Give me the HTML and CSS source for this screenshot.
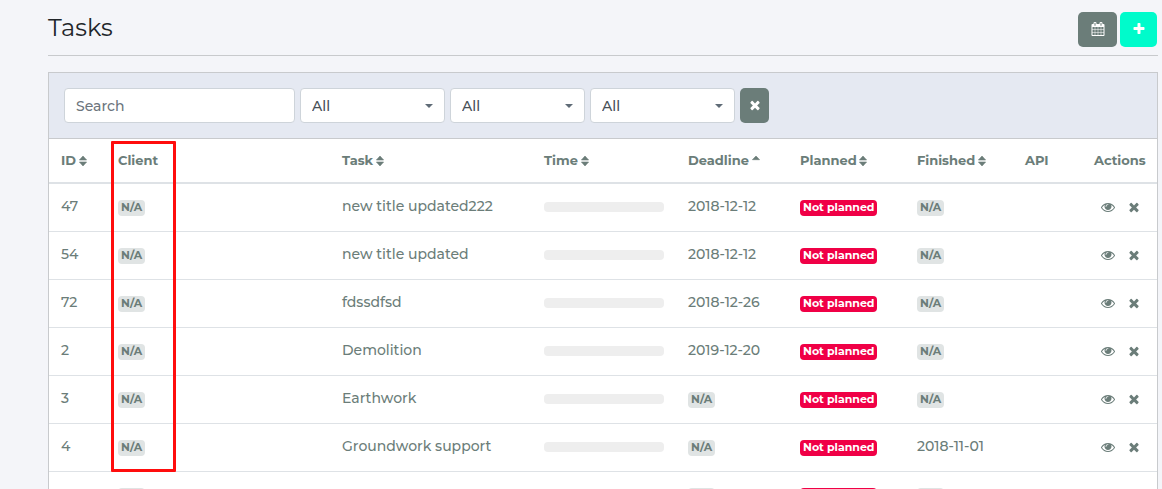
FILE: index.html
```html
<!DOCTYPE html>
<html lang="en">
<head>
<meta charset="utf-8">
<title>Tasks</title>
<link rel="stylesheet" href="styles.css">
<script src="tasks.js" defer></script>
</head>
<body>
<svg class="sprite" aria-hidden="true">
  <symbol id="calendar" viewBox="0 0 1792 1792"><path d="M192 1664h288v-288h-288v288zm352 0h320v-288h-320v288zm-352-352h288v-320h-288v320zm352 0h320v-320h-320v320zm-352-384h288v-288h-288v288zm736 736h320v-288h-320v288zm-384-736h320v-288h-320v288zm768 736h288v-288h-288v288zm-384-352h320v-320h-320v320zm-352-864v-288q0-13-9.500-22.500t-22.500-9.500h-64q-13 0-22.500 9.500t-9.500 22.500v288q0 13 9.500 22.500t22.500 9.500h64q13 0 22.500-9.500t9.500-22.500zm736 864h288v-320h-288v320zm-384-384h320v-288h-320v288zm384 0h288v-288h-288v288zm32-480v-288q0-13-9.500-22.500t-22.500-9.500h-64q-13 0-22.500 9.500t-9.500 22.500v288q0 13 9.500 22.500t22.500 9.500h64q13 0 22.500-9.500t9.500-22.500zm384-64v1280q0 52-38 90t-90 38h-1408q-52 0-90-38t-38-90v-1280q0-52 38-90t90-38h128v-96q0-66 47-113t113-47h64q66 0 113 47t47 113v96h384v-96q0-66 47-113t113-47h64q66 0 113 47t47 113v96h128q52 0 90 38t38 90z"/></symbol>
  <symbol id="plus" viewBox="0 0 1792 1792"><path d="M1600 736v192q0 40-28 68t-68 28h-416v416q0 40-28 68t-68 28h-192q-40 0-68-28t-28-68v-416h-416q-40 0-68-28t-28-68v-192q0-40 28-68t68-28h416v-416q0-40 28-68t68-28h192q40 0 68 28t28 68v416h416q40 0 68 28t28 68z"/></symbol>
  <symbol id="times" viewBox="0 0 1792 1792"><path d="M1490 1322q0 40-28 68l-136 136q-28 28-68 28t-68-28l-294-294-294 294q-28 28-68 28t-68-28l-136-136q-28-28-28-68t28-68l294-294-294-294q-28-28-28-68t28-68l136-136q28-28 68-28t68 28l294 294 294-294q28-28 68-28t68 28l136 136q28 28 28 68t-28 68l-294 294 294 294q28 28 28 68z"/></symbol>
  <symbol id="eye" viewBox="0 0 1792 1792"><path d="M1664 960q-152-236-381-353 61 104 61 225 0 185-131.500 316.500t-316.500 131.500-316.500-131.500-131.500-316.500q0-121 61-225-229 117-381 353 133 205 333.500 326.500t434.500 121.500 434.500-121.500 333.500-326.500zm-720-384q0-20-14-34t-34-14q-125 0-214.500 89.500t-89.500 214.500q0 20 14 34t34 14 34-14 14-34q0-86 61-147t147-61q20 0 34-14t14-34zm848 384q0 34-20 69-140 230-376.500 368.500t-499.500 138.500-499.500-139-376.500-368q-20-35-20-69t20-69q140-229 376.500-368t499.500-139 499.500 139 376.500 368q20 35 20 69z"/></symbol>
  <symbol id="sort" viewBox="0 0 8 12"><path d="M4 1 7.600 5H.4zM.4 7h7.200L4 11z" stroke-linejoin="round" stroke="currentColor" stroke-width=".6"/></symbol>
  <symbol id="sort-up" viewBox="0 0 8 12"><path d="M4 1 7.600 4.700H.4z" stroke-linejoin="round" stroke="currentColor" stroke-width=".6"/></symbol>
</svg>
<main class="page">
  <header class="page-header">
    <h1 class="title">Tasks</h1>
    <div class="header-actions">
      <button class="btn btn-calendar" type="button" aria-label="Calendar"><svg class="icon"><use href="#calendar"/></svg></button>
      <button class="btn btn-add" type="button" aria-label="Add task"><svg class="icon"><use href="#plus"/></svg></button>
    </div>
  </header>
  <section class="panel">
    <form class="filters">
      <input class="control search" type="text" placeholder="Search" aria-label="Search">
      <div class="select"><select class="control" aria-label="Client"><option>All</option></select></div>
      <div class="select select-narrow"><select class="control" aria-label="Planned"><option>All</option></select></div>
      <div class="select"><select class="control" aria-label="Finished"><option>All</option></select></div>
      <button class="btn btn-clear" type="reset" aria-label="Clear filters"><svg class="icon"><use href="#times"/></svg></button>
    </form>
    <div class="table-area">
      <table class="tasks">
        <colgroup><col class="col-id"><col class="col-client"><col class="col-task"><col class="col-time"><col class="col-deadline"><col class="col-planned"><col class="col-finished"><col class="col-api"><col class="col-actions"></colgroup>
        <thead>
          <tr>
            <th>ID <svg class="sort"><use href="#sort"/></svg></th>
            <th>Client</th>
            <th>Task <svg class="sort"><use href="#sort"/></svg></th>
            <th>Time <svg class="sort"><use href="#sort"/></svg></th>
            <th>Deadline <svg class="sort"><use href="#sort-up"/></svg></th>
            <th>Planned <svg class="sort"><use href="#sort"/></svg></th>
            <th>Finished <svg class="sort"><use href="#sort"/></svg></th>
            <th>API</th>
            <th class="actions-head">Actions</th>
          </tr>
        </thead>
        <tbody id="rows"></tbody>
      </table>
      <div class="highlight"></div>
    </div>
  </section>
</main>
</body>
</html>
```
FILE: styles.css
```css
* { box-sizing: border-box; }

body {
  margin: 0;
  background: #f4f5f9;
  color: #6b7d79;
  font-family: Montserrat, Inter, "Open Sans", sans-serif;
  font-size: 14px;
  font-weight: 500;
  line-height: 20px;
}

.sprite { display: none; }

.page { padding: 12px 4px 0 48px; }

.page-header {
  display: flex;
  align-items: flex-start;
  justify-content: space-between;
  height: 44px;
  margin-bottom: 16px;
  padding-right: 1px;
  border-bottom: 1px solid #c8cacd;
}

.title {
  margin: 0;
  color: #212529;
  font-size: 24px;
  font-weight: 400;
  line-height: 31px;
}

.header-actions { display: flex; gap: 3px; }

.btn {
  display: flex;
  align-items: center;
  justify-content: center;
  height: 35px;
  padding: 0;
  border: 0;
  border-radius: 5px;
  background: #6b7d79;
  color: #fff;
}

.btn-calendar { width: 39px; }
.btn-add { width: 37px; background: #00fbcb; }
.btn-clear { width: 29px; }

.icon {
  display: block;
  width: 14px;
  height: 14px;
  fill: currentColor;
}

.btn .icon { margin-bottom: 1px; }

.panel {
  border: 1px solid #c8cacd;
  background: #fff;
}

.filters {
  display: flex;
  gap: 5px;
  padding: 15px;
  border-bottom: 1px solid #c8cacd;
  background: #e5e9f2;
}

.control {
  width: 100%;
  height: 35px;
  padding: 0 11px;
  border: 1px solid #ced4da;
  border-radius: 4px;
  background: #fff;
  color: #495057;
  font: inherit;
  appearance: none;
}

.control::placeholder { color: #6c757d; opacity: 1; }

.search { width: 231px; }

.select { position: relative; width: 145px; }
.select-narrow { width: 135px; }

.select::after {
  content: "";
  position: absolute;
  top: 16px;
  right: 12px;
  border: 4px solid transparent;
  border-top-color: #5f6b76;
  border-bottom: 0;
  pointer-events: none;
}

.table-area { position: relative; }

.tasks {
  width: 100%;
  table-layout: fixed;
  border-collapse: separate;
  border-spacing: 0;
}

.col-id { width: 57px; }
.col-client { width: 224px; }
.col-time { width: 144px; }
.col-deadline { width: 112px; }
.col-planned { width: 117px; }
.col-finished { width: 108px; }
.col-api { width: 69px; }
.col-actions { width: 75px; }

.tasks th {
  height: 45px;
  padding: 0 12px 2px;
  border-bottom: 2px solid #dee2e6;
  font-size: 13px;
  font-weight: 700;
  text-align: left;
  white-space: nowrap;
}

.tasks td {
  height: 48px;
  padding: 12px 12px 15px;
  border-bottom: 1px solid #dee2e6;
  vertical-align: top;
  white-space: nowrap;
}

.tasks .actions-head { text-align: right; }

.sort {
  width: 8px;
  height: 12px;
  margin-left: -1px;
  fill: currentColor;
  vertical-align: -2px;
}

.badge {
  display: block;
  width: max-content;
  margin-top: 4px;
  padding: 0 3px 1px;
  border-radius: 4px;
  background: #e0e4e4;
  font-size: 11px;
  font-weight: 700;
  line-height: 15px;
}

.badge-danger { background: #f00046; color: #fff; }

.progress {
  height: 10px;
  margin-top: 6px;
  border-radius: 4px;
  background: #eee;
}

.row-actions {
  display: flex;
  justify-content: flex-end;
  gap: 12px;
  padding-top: 4px;
  padding-right: 4px;
}

.row-actions a { color: inherit; }

.highlight {
  position: absolute;
  top: 2px;
  left: 62px;
  width: 65px;
  height: 331px;
  border: 3px solid #ff0d0d;
  border-radius: 1px;
  pointer-events: none;
}
```
FILE: tasks.js
```js
const tasks = [
  ["47", "new title updated222", "2018-12-12", ""],
  ["54", "new title updated", "2018-12-12", ""],
  ["72", "fdssdfsd", "2018-12-26", ""],
  ["2", "Demolition", "2019-12-20", ""],
  ["3", "Earthwork", "", ""],
  ["4", "Groundwork support", "", "2018-11-01"],
  ["", "", "", ""]
];
const orNA = value => value || '<span class="badge">N/A</span>';
document.getElementById("rows").innerHTML = tasks.map(([id, name, deadline, finished]) => `
  <tr>
    <td>${id}</td>
    <td>${orNA("")}</td>
    <td>${name}</td>
    <td><div class="progress"></div></td>
    <td>${orNA(deadline)}</td>
    <td><span class="badge badge-danger">Not planned</span></td>
    <td>${orNA(finished)}</td>
    <td></td>
    <td><div class="row-actions">
      <a href="#" aria-label="View"><svg class="icon"><use href="#eye"/></svg></a>
      <a href="#" aria-label="Delete"><svg class="icon"><use href="#times"/></svg></a>
    </div></td>
  </tr>`).join("");
```
